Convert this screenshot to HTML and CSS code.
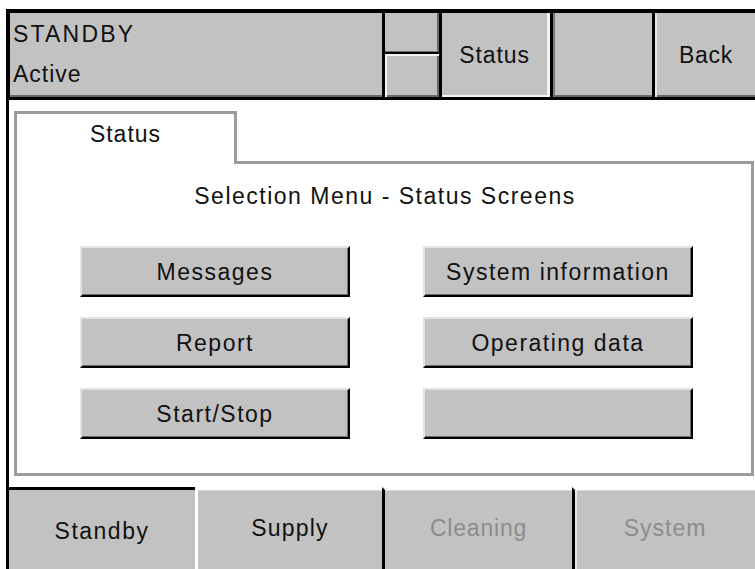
FILE: index.html
```html
<!DOCTYPE html>
<html>
<head>
<meta charset="utf-8">
<link rel="stylesheet" href="styles.css">
</head>
<body>
<div class="screen">
  <div class="topbar">
    <div class="cell title">
      <div class="t1">STANDBY</div>
      <div class="t2">Active</div>
    </div>
    <div class="stack">
      <div class="cell mini up"></div>
      <div class="cell mini down"></div>
    </div>
    <div class="cell btn status pressed">Status</div>
    <div class="cell btn empty"></div>
    <div class="cell btn back">Back</div>
  </div>
  <div class="main">
    <div class="panelwrap">
      <div class="tabrow">
        <div class="tabhead">Status</div>
        <div class="tabfill"></div>
      </div>
      <div class="tabbody">
        <div class="heading">Selection Menu - Status Screens</div>
        <div class="grid">
          <div class="mbtn">Messages</div>
          <div class="mbtn">System information</div>
          <div class="mbtn">Report</div>
          <div class="mbtn">Operating data</div>
          <div class="mbtn">Start/Stop</div>
          <div class="mbtn"></div>
        </div>
      </div>
    </div>
    <div class="bottombar">
      <div class="btab sel">Standby</div>
      <div class="btab supply">Supply</div>
      <div class="btab dis cleaning">Cleaning</div>
      <div class="btab dis system">System</div>
    </div>
  </div>
</div>
</body>
</html>
```

FILE: styles.css
```css
html, body {
  margin: 0;
  padding: 0;
  background: #fff;
}
body {
  width: 755px;
  height: 569px;
  overflow: hidden;
  font-family: "Liberation Sans", Arial, sans-serif;
  font-size: 23px;
  line-height: 26px;
  letter-spacing: 1.2px;
  color: #111;
}
.screen {
  padding-top: 9px;
}
.topbar {
  margin-left: 6px;
  background: #000;
  display: flex;
  gap: 3px;
  padding: 4px 0 3px 4px;
  height: 84px;
}
.cell {
  background: #c2c2c2;
  box-sizing: border-box;
}
.title {
  width: 372px;
  padding: 8px 0 0 3px;
  box-shadow: inset 0 -2px 0 #6a6a6a;
}
.t1 {
  letter-spacing: 2.2px;
}
.t2 {
  margin-top: 14px;
  letter-spacing: 1px;
}
.stack {
  width: 54px;
  display: flex;
  flex-direction: column;
}
.mini.up {
  height: 39px;
  box-shadow: inset -2px -1px 0 #6a6a6a;
}
.mini.down {
  margin-top: 2px;
  flex: 1;
  border-top: 2px solid #f4f4f4;
  border-left: 2px solid #f4f4f4;
  box-shadow: inset -2px -2px 0 #6a6a6a;
}
.btn {
  display: flex;
  align-items: center;
  justify-content: center;
  letter-spacing: 0.9px;
}
.status {
  width: 108px;
  border-right: 3px solid #f4f4f4;
  border-bottom: 2px solid #f4f4f4;
  padding-top: 2px;
}
.empty {
  width: 99px;
  box-shadow: inset 2px 0 0 #7a7a7a, inset 0 -2px 0 #6a6a6a;
}
.back {
  flex: 1;
  padding-left: 2px;
  letter-spacing: 0.7px;
  box-shadow: inset 2px 0 0 #e6e6e6, inset 0 -2px 0 #6a6a6a;
}
.main {
  margin-left: 6px;
  border-left: 3px solid #000;
}
.panelwrap {
  padding: 11px 1px 11px 5px;
}
.tabrow {
  display: flex;
  height: 53px;
}
.tabhead {
  width: 223px;
  box-sizing: border-box;
  border: 3px solid #9c9c9c;
  border-bottom: none;
  text-align: center;
  padding-top: 7px;
  letter-spacing: 1px;
}
.tabfill {
  flex: 1;
  border-bottom: 3px solid #9c9c9c;
}
.tabbody {
  border: 3px solid #9c9c9c;
  border-top: none;
  padding: 19px 0 34px 0;
}
.heading {
  text-align: center;
  padding-left: 2px;
  letter-spacing: 1.5px;
}
.grid {
  margin-top: 37px;
  padding-left: 63px;
  display: grid;
  grid-template-columns: 270px 270px;
  grid-auto-rows: 51px;
  column-gap: 73px;
  row-gap: 20px;
}
.mbtn {
  background: #c2c2c2;
  box-sizing: border-box;
  border-top: 2px solid #e2e2e2;
  border-left: 2px solid #e2e2e2;
  border-right: 2px solid #000;
  border-bottom: 2px solid #000;
  box-shadow: inset -1px -1px 0 #6e6e6e;
  display: flex;
  align-items: center;
  justify-content: center;
  letter-spacing: 1.5px;
}
.bottombar {
  display: flex;
  height: 82px;
}
.btab {
  background: #c2c2c2;
  box-sizing: border-box;
  border-top: 3px solid #fff;
  text-align: center;
  padding-top: 25px;
  box-shadow: inset 0 1px 0 #d8d8d8;
}
.btab.sel {
  width: 186px;
  border-top: 3px solid #000;
  padding-top: 28px;
  box-shadow: none;
  letter-spacing: 1.5px;
}
.supply {
  width: 187px;
  border-left: 3px solid #fff;
}
.cleaning {
  width: 190px;
  border-left: 3px solid #000;
  letter-spacing: 0.8px;
}
.system {
  flex: 1;
  border-left: 3px solid #000;
  letter-spacing: 1px;
  box-shadow: inset 2px 0 0 #e8e8e8, inset 0 1px 0 #d8d8d8;
}
.dis {
  color: #8c8c8c;
}
```
